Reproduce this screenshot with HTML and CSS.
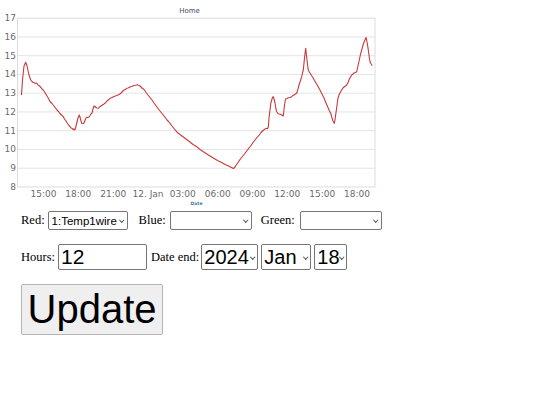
FILE: index.html
```html
<!DOCTYPE html>
<html>
<head>
<meta charset="utf-8">
<link rel="stylesheet" href="styles.css">
</head>
<body>
<svg class="chart" width="390" height="208" viewBox="0 0 390 208" xmlns="http://www.w3.org/2000/svg">
  <text class="title" x="189.5" y="12.5" text-anchor="middle">Home</text>
  <g class="grid">
    <line x1="18" y1="36.95" x2="375" y2="36.95"/>
    <line x1="18" y1="55.7" x2="375" y2="55.7"/>
    <line x1="18" y1="74.45" x2="375" y2="74.45"/>
    <line x1="18" y1="93.2" x2="375" y2="93.2"/>
    <line x1="18" y1="111.95" x2="375" y2="111.95"/>
    <line x1="18" y1="130.7" x2="375" y2="130.7"/>
    <line x1="18" y1="149.45" x2="375" y2="149.45"/>
    <line x1="18" y1="168.2" x2="375" y2="168.2"/>
  </g>
  <rect class="frame" x="17.5" y="18.2" width="357.5" height="168.75"/>
  <g class="ylab" text-anchor="end">
    <text x="16" y="21.2">17</text>
    <text x="16" y="39.95">16</text>
    <text x="16" y="58.7">15</text>
    <text x="16" y="77.45">14</text>
    <text x="16" y="96.2">13</text>
    <text x="16" y="114.95">12</text>
    <text x="16" y="133.7">11</text>
    <text x="16" y="152.45">10</text>
    <text x="16" y="171.2">9</text>
    <text x="16" y="189.95">8</text>
  </g>
  <g class="xlab" text-anchor="middle">
    <text x="43.5" y="197">15:00</text>
    <text x="78.3" y="197">18:00</text>
    <text x="113.2" y="197">21:00</text>
    <text x="148" y="197">12. Jan</text>
    <text x="182.8" y="197">03:00</text>
    <text x="217.7" y="197">06:00</text>
    <text x="252.5" y="197">09:00</text>
    <text x="287.3" y="197">12:00</text>
    <text x="322.2" y="197">15:00</text>
    <text x="357" y="197">18:00</text>
  </g>
  <text class="axis-title" x="196.5" y="205" text-anchor="middle">Date</text>
  <polyline class="series" points="21.5,95 22.5,80 24,66 25.7,62.3 27,66 29,75 30.7,80 32,81.5 33,82.5 34,82.8 35,83.3 36,83 37,83.5 38,85 39,85.5 40,86.5 41,87.5 42,89 43,89.8 44,91 45.5,93.5 47,96 48.5,98.5 50,101.5 52,103.5 54,106 55.5,108 57,110 58.5,111.5 60,113.5 61.5,115 63.3,116.7 64.5,119 66,121 67.5,123.5 69,125.5 70,126.5 71,128 72,128.3 73,129.5 73.8,129 74.3,130 75,129.5 75.5,128 77,122 78,118 79.3,115 80,117 80.5,119 81.7,123.3 83,123.5 84,123 85.5,119 86.7,117.3 88,117.5 89,117 90,115.5 91,114 92,113 92.5,111 93,109 94,106 95,106.5 96,107.5 97,108 98.3,108.3 99.5,107 101,106 102.5,105 104,104 105.5,102.8 107,101 108.5,99.8 110,98.3 112,97.5 114,96.5 116,95.8 118,95 119.5,94.2 121,93 122.5,91.5 124,90 125.5,89.5 126.7,88.3 128,88 129,87.5 130,87 131,86.5 132.5,86.3 134,85.5 135.5,85.3 137.3,84.7 138.5,85.3 140,86 141,87 142,88 143.5,89 145,90.7 146.5,93 148,95 150,97.5 152,100 154,103 156.7,106.7 158,108.5 160,111 162,113.5 164,116 165.5,118 167,120 168.5,121.5 170,123.3 172,126 174,128.5 176,131 178.3,133.3 180,134.5 182,136 184,137.5 186,139 188,140.5 190,142 193,144.5 196.7,146.7 200,149.5 203,151.5 206,153.5 210,156 212.5,157.5 215,159 217.5,160.5 220,161.7 222.5,163 225,164.5 227.5,165.5 230,166.7 231.5,167.5 233.3,168.5 234,168 235,167 236.5,164.5 238,162.5 240,159.5 242,157 244.5,154 246.7,151 249,148 251,145.5 253,142.5 255,140 257,137.5 259.3,135 261,132.5 263,130.5 265,129 266.7,128.3 267.5,128.8 268.3,127 269,118 270,110 270.8,103 271.7,100 272.5,97.5 273.3,96.7 274,99 275,103 275.8,108 276.7,111.7 278,113.5 279,114 280.5,114.3 281.7,115 282.5,115.5 283.3,116 284,110 284.5,105 285.5,99 287,98.5 288.3,97.7 290,97.5 291.7,96.7 293,95.5 294,95 295.5,94 296.7,93 298,89 299,85 300.5,80.5 301.7,76.7 302.5,73 303.3,70 304,63 304.5,58 305.2,52 305.7,48.3 306.3,54 307,60 307.6,65 308.3,70 309,71.5 310,73 311.5,75.5 313.3,78.3 314.5,80.5 316,83 318,86.5 320,90 322,94 324,98 326,103 328.3,108.3 329.5,111 331,114 332,118 333,121 334.3,123.3 335,120 335.5,116 336.5,109 337.3,103 338,98 339,95 340.5,92 341.7,90 343,88 344,87 345.5,86 346.7,85 348,82.5 349,80 350.5,77 351.7,75 353,74 354,73 355.5,72.5 356.7,71.7 357.3,69 358,66 359.5,59 360.7,53.3 362,49 363,45 364.5,41 366,37.5 366.5,39.5 367,42 367.7,46 368.3,50 369,55 369.5,59 370,61.5 370.7,63.3 371.5,64.5 372.3,65.7"/>
</svg>
<form class="form">
  <div class="row row-colors">
    <label class="lbl lbl-red">Red:</label>
    <span class="dd dd-small sel-red"><select class="sel"><option>1:Temp1wire</option></select></span>
    <label class="lbl lbl-blue">Blue:</label>
    <span class="dd dd-small sel-wide"><select class="sel"><option></option></select></span>
    <label class="lbl lbl-green">Green:</label>
    <span class="dd dd-small sel-wide"><select class="sel"><option></option></select></span>
  </div>
  <div class="row row-time">
    <label class="lbl">Hours:</label>
    <input class="hours" type="text" value="12">
    <label class="lbl lbl-date">Date end:</label>
    <span class="dd dd-big sel-year"><select class="big"><option>2024</option></select></span>
    <span class="dd dd-big sel-month"><select class="big"><option>Jan</option></select></span>
    <span class="dd dd-big sel-day"><select class="big"><option>18</option></select></span>
  </div>
  <div class="row row-btn">
    <button class="update" type="button">Update</button>
  </div>
</form>
</body>
</html>
```
FILE: styles.css
```css
html, body {
  margin: 0;
  padding: 0;
  background: #ffffff;
}
body {
  font-family: "Liberation Serif", serif;
  width: 540px;
  height: 405px;
  overflow: hidden;
}
.chart {
  display: block;
}
.title {
  font-family: "DejaVu Sans", sans-serif;
  font-size: 7px;
  fill: #3e4d6b;
}
.grid line {
  stroke: #e4e4e4;
  stroke-width: 1;
}
.frame {
  fill: none;
  stroke: #dcdcdc;
  stroke-width: 1;
}
.ylab text, .xlab text {
  font-family: "DejaVu Sans", sans-serif;
  font-size: 9px;
  fill: #6b6b6b;
}
.axis-title {
  font-family: "DejaVu Sans", sans-serif;
  font-size: 4.5px;
  font-weight: bold;
  fill: #4a74a8;
}
.series {
  fill: none;
  stroke: #c8393a;
  stroke-width: 1.1;
  stroke-linejoin: round;
}
.form {
  margin: 0;
  padding: 3px 0 0 21px;
}
.row {
  display: flex;
  align-items: center;
}
.lbl {
  font-family: "Liberation Serif", serif;
  font-size: 12.5px;
  color: #000;
}

/* dropdown wrapper: native select without the system arrow, plus a small chevron */
.dd {
  position: relative;
  display: inline-flex;
  flex: none;
}
.dd select {
  -webkit-appearance: none;
  appearance: none;
  width: 100%;
  box-sizing: border-box;
  margin: 0;
  border: 1px solid #767676;
  border-radius: 2px;
  background: #ffffff;
  color: #000;
  font-family: "Liberation Sans", sans-serif;
}
.dd::after {
  content: "";
  position: absolute;
  width: 2.5px;
  height: 2.5px;
  border-right: 1px solid #555;
  border-bottom: 1px solid #555;
  transform: rotate(45deg);
  pointer-events: none;
}
.dd-small::after {
  right: 4px;
  top: 7px;
}
.dd-big::after {
  right: 3.5px;
  top: 10.5px;
}
.sel {
  font-size: 11.5px;
  height: 19px;
  padding: 0 0 0 3px;
}
.big {
  font-size: 20px;
  height: 26px;
  padding: 0 0 0 2px;
}

.row-colors {
  height: 19px;
}
.lbl-red { margin-right: 3px; }
.sel-red { width: 80px; }
.lbl-blue { margin-left: 11px; margin-right: 4px; }
.lbl-green { margin-left: 9px; margin-right: 5px; }
.sel-wide { width: 82px; }

.row-time {
  margin-top: 14px;
  height: 26px;
}
.hours {
  font-family: "Liberation Sans", sans-serif;
  font-size: 21px;
  width: 89px;
  height: 26px;
  box-sizing: border-box;
  margin: 0 4px 0 3px;
  padding: 0 2px;
  border: 1px solid #767676;
  border-radius: 2px;
  color: #000;
}
.lbl-date { margin-right: 2px; }
.sel-year { width: 57px; margin-right: 3px; }
.sel-month { width: 50px; margin-right: 3px; }
.sel-day { width: 33px; }

.row-btn {
  margin-top: 14px;
}
.update {
  font-family: "Liberation Sans", sans-serif;
  font-size: 40px;
  width: 142px;
  height: 51px;
  margin: 0;
  padding: 0;
  color: #000;
  background: #efefef;
  border: 1px solid #b4b4b4;
  border-radius: 2px;
}
```
